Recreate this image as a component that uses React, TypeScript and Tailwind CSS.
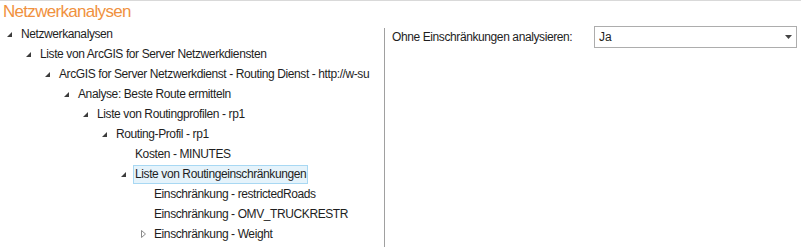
import React from 'react'

type Node = {
    label: string
    level: number
    arrow?: 'open' | 'closed'
    selected?: boolean
}

const nodes: Node[] = [
    { label: 'Netzwerkanalysen', level: 0, arrow: 'open' },
    { label: 'Liste von ArcGIS for Server Netzwerkdiensten', level: 1, arrow: 'open' },
    { label: 'ArcGIS for Server Netzwerkdienst - Routing Dienst - http://w-su', level: 2, arrow: 'open' },
    { label: 'Analyse: Beste Route ermitteln', level: 3, arrow: 'open' },
    { label: 'Liste von Routingprofilen - rp1', level: 4, arrow: 'open' },
    { label: 'Routing-Profil - rp1', level: 5, arrow: 'open' },
    { label: 'Kosten - MINUTES', level: 6 },
    { label: 'Liste von Routingeinschränkungen', level: 6, arrow: 'open', selected: true },
    { label: 'Einschränkung - restrictedRoads', level: 7 },
    { label: 'Einschränkung - OMV_TRUCKRESTR', level: 7 },
    { label: 'Einschränkung - Weight', level: 7, arrow: 'closed' },
]

const indents = ['pl-[2px]', 'pl-[21px]', 'pl-[40px]', 'pl-[59px]', 'pl-[78px]', 'pl-[97px]', 'pl-[116px]', 'pl-[135px]']

const Arrow = ({ kind }: { kind?: 'open' | 'closed' }) => {
    if (kind === 'open') {
        return (
            <svg width="19" height="20" viewBox="0 0 19 20">
                <path d="M10 8 L10 13 L5 13 Z" fill="#3c3c3c" />
            </svg>
        )
    }
    if (kind === 'closed') {
        return (
            <svg width="19" height="20" viewBox="0 0 19 20">
                <path d="M6.5 6.5 L10.5 10 L6.5 13.5 Z" fill="none" stroke="#8a8a8a" strokeWidth="1" />
            </svg>
        )
    }
    return <span className="w-[19px]" />
}

const App = () => {
    return (
        <div
            className="w-[801px] h-[247px] bg-white border-t border-[#d9d9d9] overflow-hidden text-[#1e1e1e]"
            style={{ fontFamily: '"Liberation Sans", Arial, sans-serif' }}>
            <div className="h-[23px] pl-[3px] text-[17px] leading-[22px] text-[#f0913e] -tracking-[0.7px]">
                Netzwerkanalysen
            </div>
            <div className="flex">
                <div className="w-[384px] shrink-0">
                    {nodes.map((n, i) => (
                        <div key={i} className={`flex items-center h-[20px] ${indents[n.level]}`}>
                            <Arrow kind={n.arrow} />
                            <span
                                className={
                                    n.selected
                                        ? 'h-[19px] -ml-[2px] px-[1px] flex items-center bg-[#e5f3fb] border border-[#a8d8f3] text-[12px] -tracking-[0.4px]'
                                        : 'text-[12px] -tracking-[0.4px] whitespace-nowrap'
                                }>
                                {n.label}
                            </span>
                        </div>
                    ))}
                </div>
                <div className="w-[1px] bg-[#a0a0a0] mt-[4px] h-[230px]" />
                <div className="flex-1 flex items-start pt-[2px]">
                    <div className="w-[209px] pl-[7px] h-[22px] flex items-center text-[12px] -tracking-[0.4px]">
                        Ohne Einschränkungen analysieren:
                    </div>
                    <div className="w-[203px] h-[22px] border border-[#adadad] flex items-center justify-between pl-[4px] pr-[4px] text-[12px]">
                        <span>Ja</span>
                        <svg width="7" height="4" viewBox="0 0 7 4">
                            <path d="M0 0 L7 0 L3.5 4 Z" fill="#444" />
                        </svg>
                    </div>
                </div>
            </div>
        </div>
    )
}

export default App
